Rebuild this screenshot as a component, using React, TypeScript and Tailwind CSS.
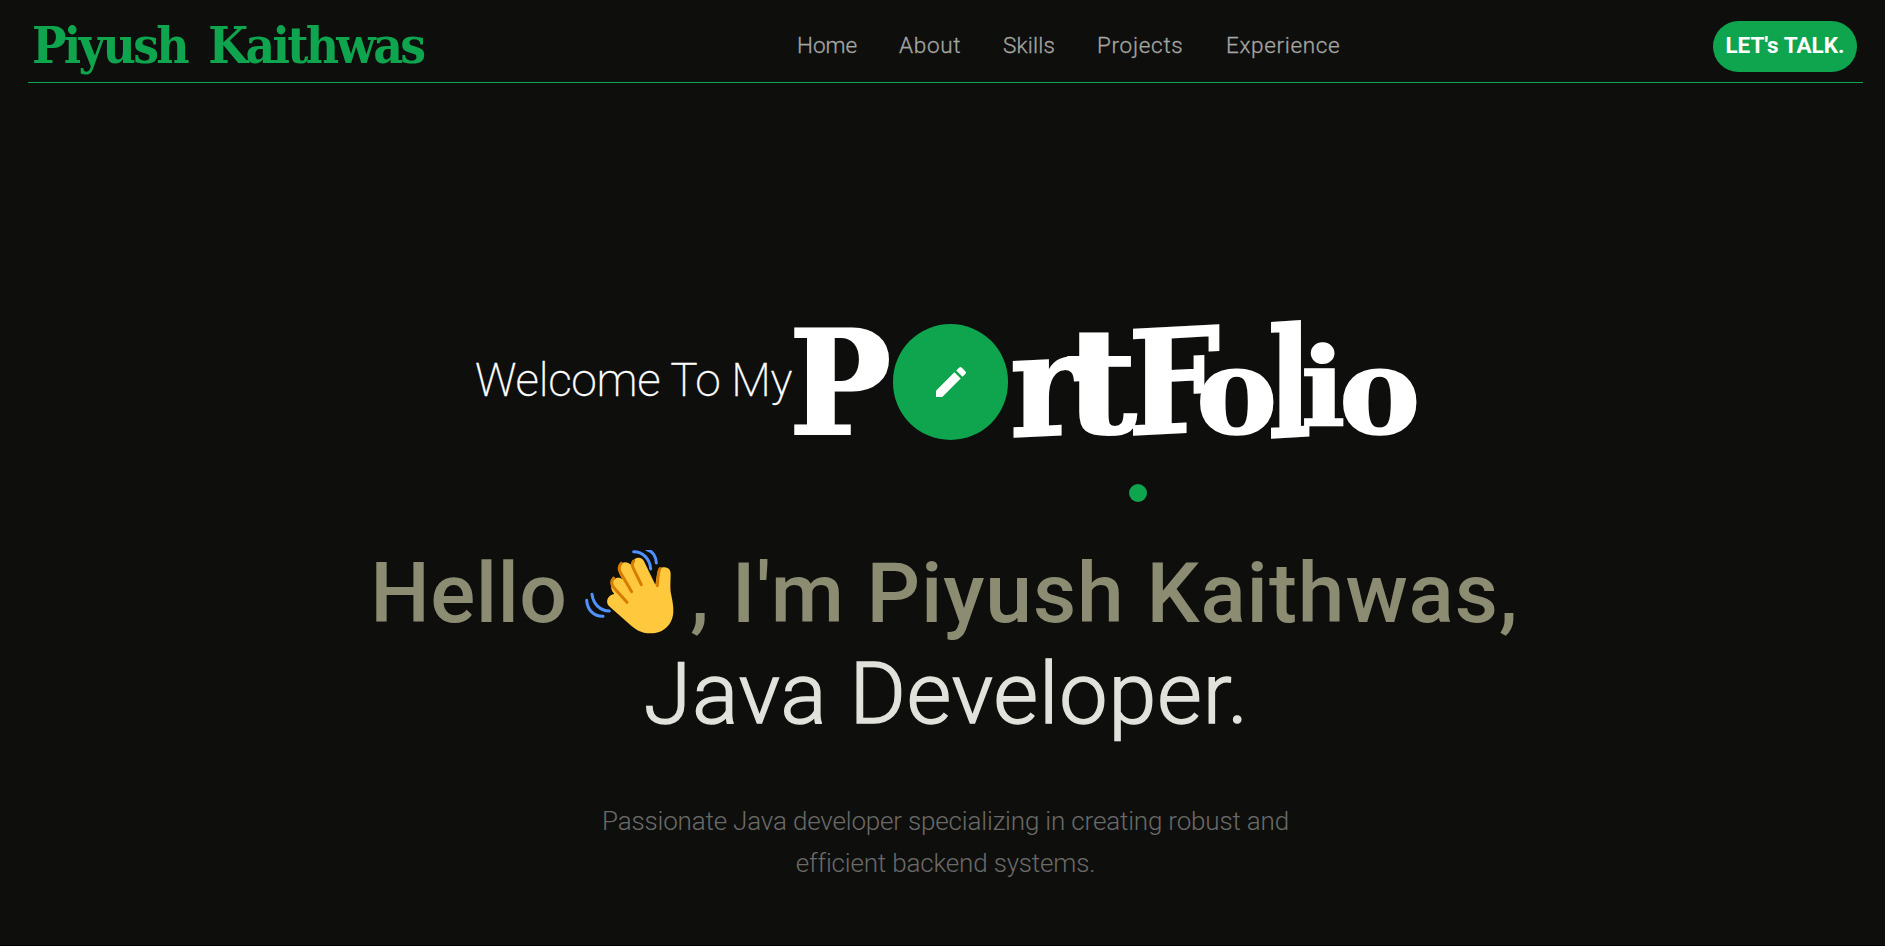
import React from "react";
import { MdEdit } from "react-icons/md";

const links = [
  { label: "Home", cls: "w-[59px]" },
  { label: "About", cls: "w-[61px] tracking-[0.7px]" },
  { label: "Skills", cls: "w-[51px] tracking-[0.2px]" },
  { label: "Projects", cls: "w-[86px] tracking-[0.7px]" },
  { label: "Experience", cls: "w-[113px] tracking-[0.65px]" },
];

const letters = [
  { ch: "r", cls: "w-[60px] translate-x-[2px] translate-y-[5px] scale-x-[1.04] -skew-y-3" },
  { ch: "t", cls: "w-[60px] translate-x-[-3px] translate-y-[1px] scale-x-[1.2] scale-y-[1.02]" },
  { ch: "F", cls: "w-[70px] translate-y-[3px] -skew-y-3" },
  { ch: "o", cls: "w-[70px] translate-x-[-2px] translate-y-[1px] scale-x-[0.94] scale-y-[0.83]" },
  { ch: "l", cls: "w-[34px] translate-y-[6px] scale-x-[0.88] scale-y-[1.05] -skew-y-3" },
  { ch: "i", cls: "w-[40px] translate-x-[-1px] translate-y-[-6px] scale-x-[0.9] scale-y-[0.76]" },
  { ch: "o", cls: "w-[74px] translate-x-[-3px] translate-y-[1px] scale-x-[0.94] scale-y-[0.83]" },
];

function WavingHand() {
  return (
    <svg viewBox="36 30 267 252" className="block h-[84px] w-[89px]" aria-label="waving hand">
      <path
        d="M103 190C100 178 108 164 124 162C106 142 116 119 130 114C138 112 145 114 149 118C132 95 135 77 148 69C158 64 168 69 179 78C176 66 183 56 192 54C202 52 209 56 213 64L247 134L253 98C255 87 263 81 275 82C287 83 293 91 293 103C293 122 291 138 293 156C297 176 302 197 301 216C299 257 268 280 234 280C207 281 186 268 168 251L111 201C107 198 104 194 103 190Z"
        fill="#ffc83d"
      />
      <path
        d="M182 63C176 70 177 77 181 85L205 134M145 70C136 80 137 89 143 99L176 155M122 114C113 124 115 135 124 145L162 187M261 86C256 92 255 102 253 137"
        fill="none" stroke="#d67d00" strokeWidth="9" strokeLinecap="round"
      />
      <path
        d="M182 35C210 35 231 57 233 87M222 29C240 33 249 51 250 69M57 163C61 193 82 212 109 213M41 181C43 211 64 230 90 229"
        fill="none" stroke="#5092ff" strokeWidth="9" strokeLinecap="round"
      />
    </svg>
  );
}

export default function App() {
  return (
    <div className="h-[946px] overflow-hidden bg-black font-['Roboto',sans-serif]">
      <div className="flex h-[945px] flex-col bg-[#0e0f0d]">
        <header className="mr-[22px] ml-7 flex h-[83px] shrink-0 items-start justify-between border-b border-[#0ea54e] pr-1.5 pl-1">
          <div className="mt-[15px] w-[391px] font-['DejaVu_Serif_Condensed','DejaVu_Serif',serif] text-[51px] leading-[60px] font-bold tracking-[-2.7px] [word-spacing:8px] whitespace-nowrap text-[#0ea54e]">
            Piyush Kaithwas
          </div>
          <nav className="mt-[29px] flex gap-[43px] text-[22.5px] leading-8 font-light text-[#a5a6a2] [-webkit-text-stroke:0.3px_currentColor]">
            {links.map((l) => (
              <a key={l.label} className={`${l.cls} whitespace-nowrap`}>{l.label}</a>
            ))}
          </nav>
          <button className="mt-[21px] flex h-[51px] w-[144px] items-center justify-center rounded-full bg-[#0ea54e] pb-0.5 text-[22.5px] font-bold whitespace-nowrap text-white">
            LET's TALK.
          </button>
        </header>
        <main className="flex flex-col items-center">
          <section className="mt-[236px] ml-1.5 flex h-[125px] items-start text-white">
            <span className="mt-[33px] w-[316px] text-[46px] leading-[56px] font-extralight tracking-[-0.3px] whitespace-nowrap [-webkit-text-stroke:0.3px_currentColor]">Welcome To My</span>
            <div className="flex font-['DejaVu_Serif_Condensed','DejaVu_Serif',serif] text-[144px] leading-[125px] font-bold [-webkit-text-stroke:2px_white]">
              <span className="w-[102px] origin-[0_113px] translate-x-[-2px] translate-y-[2px] scale-x-[1.05]">P</span>
              <span className="mt-[5px] flex h-[116px] w-[115px] items-center justify-center rounded-full bg-[#0ea54e]">
                <MdEdit className="size-10 [-webkit-text-stroke:0px]" />
              </span>
              {letters.map((l, i) => (
                <span key={i} className={`${l.cls} origin-[0_113px]`}>{l.ch}</span>
              ))}
            </div>
          </section>
          <span className="mt-10 ml-[390px] size-[18px] rounded-full bg-[#0ea54e]" />
          <h1 className="mt-10 ml-1 flex h-[100px] items-start text-[84px] leading-[103px] font-medium whitespace-nowrap text-[#8c8c73]">
            <span className="w-[215px] tracking-[0.4px]">Hello</span>
            <span className="mt-2"><WavingHand /></span>
            <span className="ml-[16px] tracking-[0.9px]">, I'm Piyush Kaithwas,</span>
          </h1>
          <h2 className="ml-2 text-[86px] leading-[104px] font-light tracking-[1px] whitespace-nowrap text-[#e2e2dc] [-webkit-text-stroke:1.5px_currentColor]">Java Developer.</h2>
          <p className="mt-[54px] ml-1.5 w-[720px] text-center text-[26px] leading-[42px] font-light tracking-[-0.17px] text-[#6a6a68]">
            Passionate Java developer specializing in creating robust and efficient backend systems.
          </p>
        </main>
      </div>
    </div>
  );
}
